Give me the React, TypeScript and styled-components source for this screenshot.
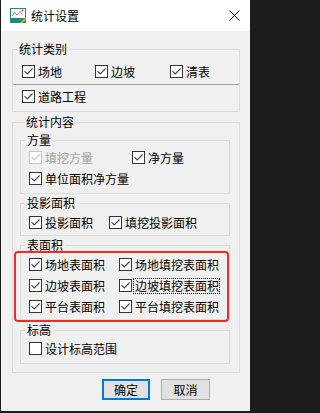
import styled, { createGlobalStyle } from "styled-components";

const GlobalStyle = createGlobalStyle`
  html, body {
    margin: 0;
    padding: 0;
    background: #1c1c1c;
  }
  body {
    font-family: "Noto Sans CJK SC", "Noto Sans", sans-serif;
    font-size: 12px;
    color: #000;
  }
`;

const Window = styled.div`
  margin-left: 1px;
  width: 249px;
  height: 411px;
  background: #f0f0f0;
  display: flex;
  flex-direction: column;
`;

const TitleBar = styled.div`
  height: 31px;
  flex: none;
  background: #fff;
  display: flex;
  align-items: center;
  gap: 5px;
  padding: 0 10px 0 9px;
`;

const Title = styled.span`
  line-height: 14px;
`;

const Close = styled.svg`
  margin-left: auto;
`;

const Body = styled.div`
  display: flex;
  flex-direction: column;
  padding: 11px 10px 0 11px;
`;

const Group = styled.fieldset<{ $mt?: number; $pt?: number; $pb?: number; $px?: string }>`
  margin: ${(p) => p.$mt ?? 0}px 0 0;
  padding: ${(p) => p.$pt ?? 0}px ${(p) => p.$px ?? "0"} ${(p) => p.$pb ?? 0}px;
  border: 1px solid #dcdcdc;
  min-width: 0;
`;

const Caption = styled.legend`
  margin-left: 4px;
  padding: 0 2px;
  height: 14px;
  line-height: 14px;
`;

const Options = styled.div<{ $cols: string; $pl: number }>`
  display: grid;
  grid-template-columns: ${(p) => p.$cols};
  grid-auto-rows: 21px;
  padding-left: ${(p) => p.$pl}px;
`;

const Separator = styled.div`
  height: 1px;
  background: #a0a0a0;
  margin: 2px 0 1px;
`;

const Item = styled.label<{ $disabled?: boolean }>`
  display: flex;
  align-items: center;
  gap: 3px;
  white-space: nowrap;
  line-height: 14px;
  color: ${(p) => (p.$disabled ? "#a0a0a0" : "#000")};
`;

const Box = styled.span<{ $disabled?: boolean }>`
  width: 13px;
  height: 13px;
  flex: none;
  box-sizing: border-box;
  border: 1px solid ${(p) => (p.$disabled ? "#c4c4c4" : "#333")};
  background: #fff;
  display: flex;
  align-items: center;
  justify-content: center;
`;

const FocusText = styled.span`
  margin-left: -2px;
  padding-left: 1px;
  border: 1px dotted #000;
  line-height: 14px;
`;

const SurfaceArea = styled.div`
  position: relative;
  margin-top: 2px;
`;

const Highlight = styled.div`
  position: absolute;
  left: -6px;
  top: 13px;
  width: 215px;
  height: 71px;
  box-sizing: border-box;
  border: 2px solid #f52828;
  border-radius: 4px;
  pointer-events: none;
`;

const Footer = styled.div`
  display: flex;
  justify-content: flex-end;
  gap: 11px;
  margin-top: 6px;
  padding-right: 30px;
`;

const Button = styled.button<{ $primary?: boolean }>`
  width: ${(p) => (p.$primary ? 48 : 49)}px;
  height: 21px;
  box-sizing: border-box;
  padding: 0;
  background: #e1e1e1;
  border: ${(p) => (p.$primary ? "2px solid #0078d7" : "1px solid #adadad")};
  font-family: inherit;
  font-size: 12px;
  line-height: 14px;
  color: #000;
`;

function Check({ label, checked = true, disabled, focused }: {
  label: string;
  checked?: boolean;
  disabled?: boolean;
  focused?: boolean;
}) {
  return (
    <Item $disabled={disabled}>
      <Box $disabled={disabled}>
        {checked && (
          <svg width="11" height="11" viewBox="0 0 11 11">
            <polyline
              points="1.5,5.2 4.2,7.9 9.6,2.5"
              fill="none"
              stroke={disabled ? "#c4c4c4" : "#444"}
              strokeWidth="1.1"
            />
          </svg>
        )}
      </Box>
      {focused ? <FocusText>{label}</FocusText> : label}
    </Item>
  );
}

function AppIcon() {
  return (
    <svg width="16" height="15" viewBox="0 0 16 15">
      <rect x="0" y="0" width="16" height="15" fill="#1d8c7e" />
      <rect x="1" y="1" width="14" height="9" fill="#fff" />
      <polyline points="2,8 4.5,4.5 7,7 10,3.5 12.5,6.5" fill="none" stroke="#e0607e" strokeWidth="1" />
      <circle cx="12.5" cy="2.5" r="1" fill="#e03030" />
      <polygon points="10,15 14.5,10.5 16,12 11.5,15" fill="#f4b41a" />
      <polygon points="14.5,10.5 16,9 16,12" fill="#e07a1a" />
    </svg>
  );
}

export default function App() {
  return (
    <>
      <GlobalStyle />
      <Window>
        <TitleBar>
          <AppIcon />
          <Title>统计设置</Title>
          <Close width="11" height="11" viewBox="0 0 11 11">
            <path d="M0.5 0.5 L10.5 10.5 M10.5 0.5 L0.5 10.5" stroke="#000" strokeWidth="1" />
          </Close>
        </TitleBar>
        <Body>
          <Group $pt={5} $pb={4}>
            <Caption>统计类别</Caption>
            <Options $cols="73px 75px auto" $pl={9}>
              <Check label="场地" />
              <Check label="边坡" />
              <Check label="清表" />
            </Options>
            <Separator />
            <Options $cols="auto" $pl={9}>
              <Check label="道路工程" />
            </Options>
          </Group>

          <Group $mt={3} $pt={4} $pb={7} $px="9px 8px">
            <Caption>统计内容</Caption>
            <Group $pb={4}>
              <Caption>方量</Caption>
              <Options $cols="103px auto" $pl={8}>
                <Check label="填挖方量" disabled />
                <Check label="净方量" />
                <Check label="单位面积净方量" />
              </Options>
            </Group>

            <Group $mt={2} $pt={2} $pb={2}>
              <Caption>投影面积</Caption>
              <Options $cols="80px auto" $pl={8}>
                <Check label="投影面积" />
                <Check label="填挖投影面积" />
              </Options>
            </Group>

            <SurfaceArea>
              <Group $pt={2} $pb={2}>
                <Caption>表面积</Caption>
                <Options $cols="90px auto" $pl={8}>
                  <Check label="场地表面积" />
                  <Check label="场地填挖表面积" />
                  <Check label="边坡表面积" />
                  <Check label="边坡填挖表面积" focused />
                  <Check label="平台表面积" />
                  <Check label="平台填挖表面积" />
                </Options>
              </Group>
              <Highlight />
            </SurfaceArea>

            <Group $mt={3} $pt={1} $pb={4}>
              <Caption>标高</Caption>
              <Options $cols="auto" $pl={8}>
                <Check label="设计标高范围" checked={false} />
              </Options>
            </Group>
          </Group>

          <Footer>
            <Button $primary>确定</Button>
            <Button>取消</Button>
          </Footer>
        </Body>
      </Window>
    </>
  );
}
